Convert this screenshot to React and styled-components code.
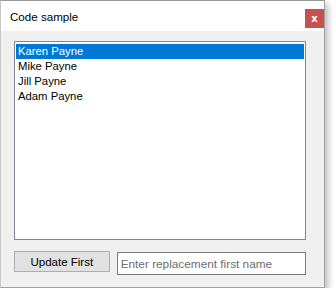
import React from 'react'
import styled, { createGlobalStyle } from 'styled-components'

const GlobalStyle = createGlobalStyle`
  html, body {
    margin: 0;
    padding: 0;
    background: #ffffff;
  }
  body {
    font-family: "Liberation Sans", Arial, sans-serif;
    font-size: 12px;
  }
`

const Window = styled.div`
  width: 325px;
  height: 288px;
  box-sizing: border-box;
  border: 1px solid #a0a0a0;
  border-left-color: #c8c8c8;
  border-top-color: #9a9a9a;
  background: #f0f0f0;
  box-shadow: 3px 4px 7px rgba(0, 0, 0, 0.28);
  display: flex;
  flex-direction: column;
`

const TitleBar = styled.div`
  height: 30px;
  background: #ffffff;
  display: flex;
  align-items: center;
  padding-left: 9px;
  padding-right: 0;
`

const Title = styled.span`
  font-size: 11.6px;
  color: #000000;
  flex: 1;
`

const CloseButton = styled.div`
  width: 19px;
  height: 19px;
  margin-top: 5px;
  background: #c75050;
  color: #ffffff;
  font-family: "DejaVu Sans", sans-serif;
  font-weight: bold;
  font-size: 10px;
  display: flex;
  align-items: center;
  justify-content: center;
  line-height: 1;
`

const Body = styled.div`
  flex: 1;
  padding: 10px 18px 0 13px;
  display: flex;
  flex-direction: column;
`

const ListBox = styled.div`
  height: 199px;
  box-sizing: border-box;
  border: 1px solid #828790;
  background: #ffffff;
  padding: 2px 1px;
`

const ListItem = styled.div`
  height: 15px;
  line-height: 15px;
  padding-left: 2px;
  font-size: 11.3px;
  color: ${p => (p.$selected ? '#ffffff' : '#000000')};
  background: ${p => (p.$selected ? '#0078d7' : 'transparent')};
`

const Footer = styled.div`
  margin-top: 11px;
  display: flex;
  align-items: flex-start;
  gap: 7px;
`

const Button = styled.div`
  width: 96px;
  height: 21px;
  box-sizing: border-box;
  border: 1px solid #adadad;
  background: #e1e1e1;
  display: flex;
  align-items: center;
  justify-content: center;
  font-size: 11.5px;
  color: #000000;
`

const TextBox = styled.div`
  width: 190px;
  height: 23px;
  margin-top: 1px;
  box-sizing: border-box;
  border: 1px solid #7a7a7a;
  background: #ffffff;
  display: flex;
  align-items: center;
  padding-left: 3px;
  font-size: 11.8px;
  color: #6d6d6d;
`

const names = ['Karen Payne', 'Mike Payne', 'Jill Payne', 'Adam Payne']

export default function App() {
  return (
    <>
      <GlobalStyle />
      <Window>
        <TitleBar>
          <Title>Code sample</Title>
          <CloseButton>x</CloseButton>
        </TitleBar>
        <Body>
          <ListBox>
            {names.map((n, i) => (
              <ListItem key={n} $selected={i === 0}>{n}</ListItem>
            ))}
          </ListBox>
          <Footer>
            <Button>Update First</Button>
            <TextBox>Enter replacement first name</TextBox>
          </Footer>
        </Body>
      </Window>
    </>
  )
}
